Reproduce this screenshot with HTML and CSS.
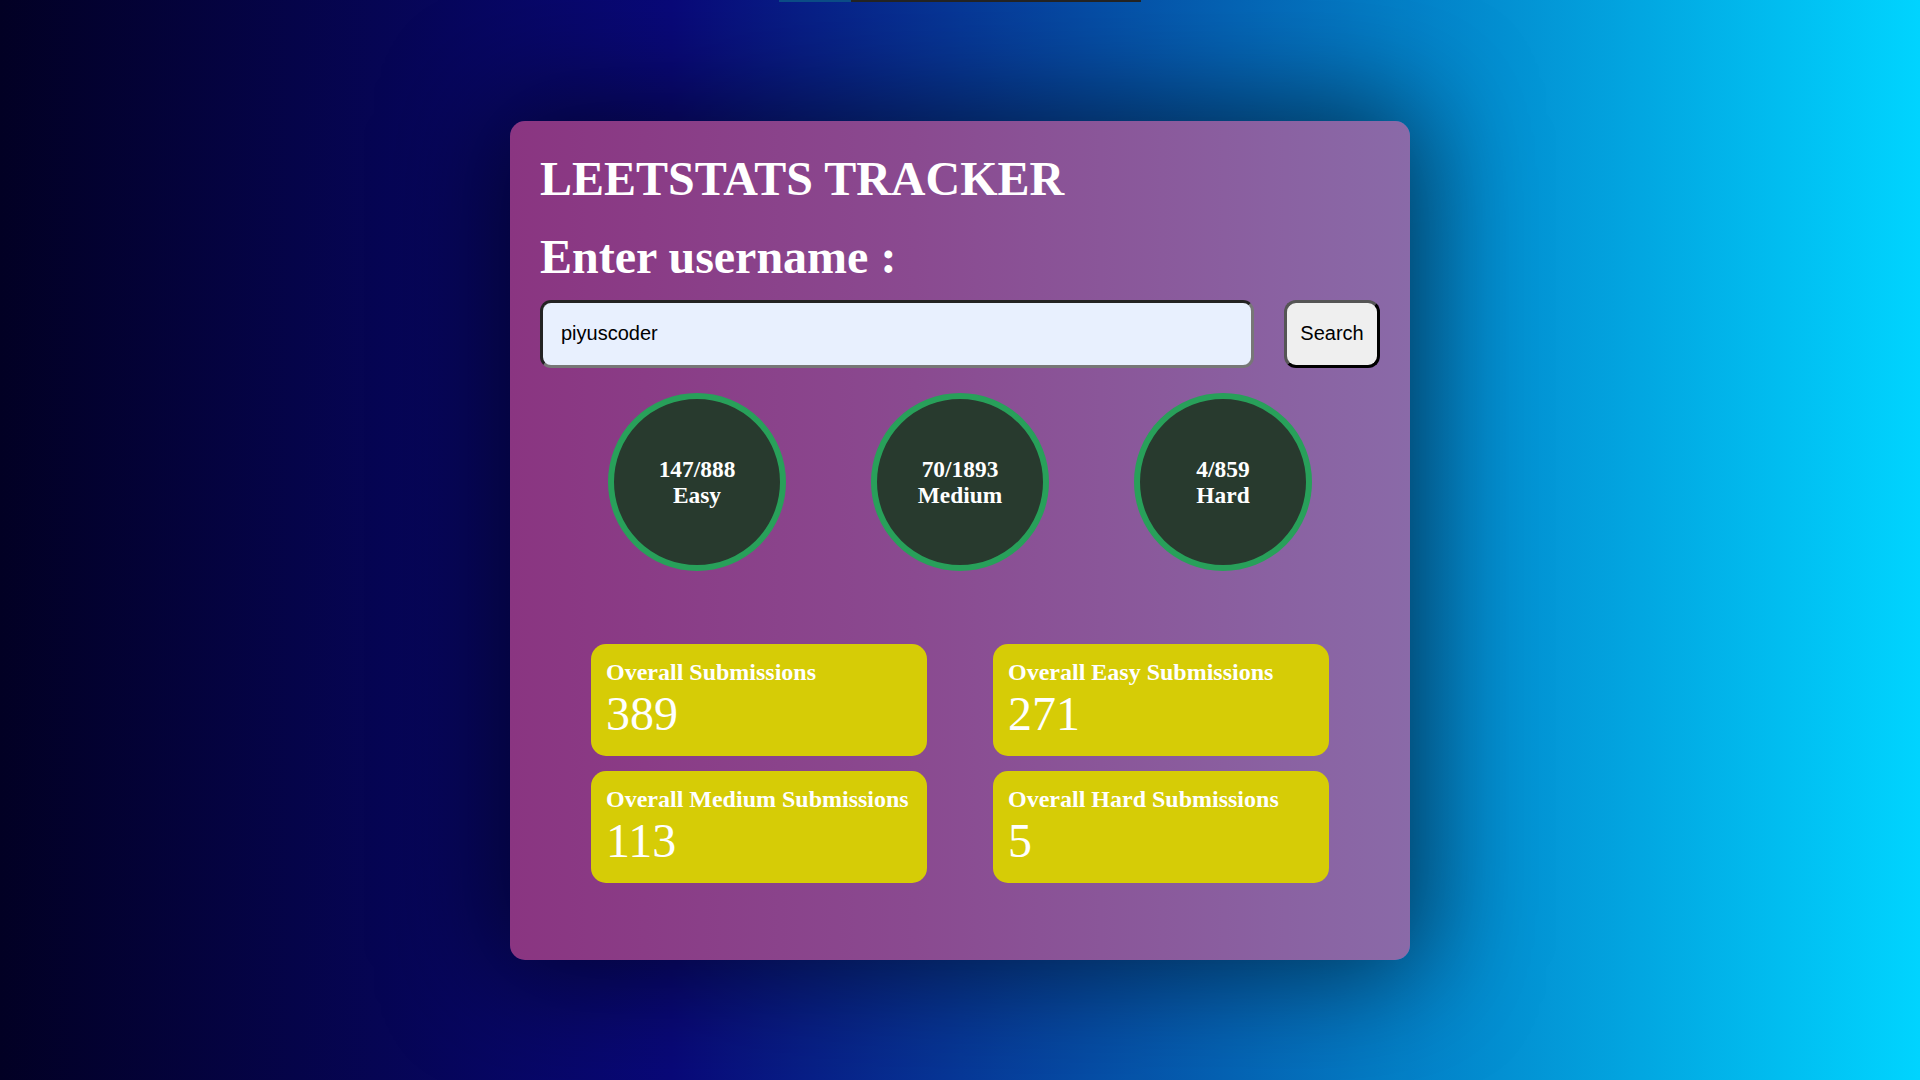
FILE: index.html
```html
<!DOCTYPE html>
<html lang="en">
<head>
<meta charset="UTF-8">
<title>LeetStats Tracker</title>
<link rel="stylesheet" href="styles.css">
</head>
<body>
  <div class="topbar"><span class="topbar-a"></span><span class="topbar-b"></span></div>
  <main class="card">
    <h1 class="title">LEETSTATS TRACKER</h1>
    <h2 class="label">Enter username :</h2>
    <div class="search-row">
      <input class="user-input" type="text" value="piyuscoder">
      <button class="search-btn">Search</button>
    </div>
    <div class="circles">
      <div class="circle"><span>147/888</span><span>Easy</span></div>
      <div class="circle"><span>70/1893</span><span>Medium</span></div>
      <div class="circle"><span>4/859</span><span>Hard</span></div>
    </div>
    <div class="stats">
      <div class="stat"><p class="stat-title">Overall Submissions</p><p class="stat-num">389</p></div>
      <div class="stat"><p class="stat-title">Overall Easy Submissions</p><p class="stat-num">271</p></div>
      <div class="stat"><p class="stat-title">Overall Medium Submissions</p><p class="stat-num">113</p></div>
      <div class="stat"><p class="stat-title">Overall Hard Submissions</p><p class="stat-num">5</p></div>
    </div>
  </main>
</body>
</html>
```

FILE: styles.css
```css
* { box-sizing: border-box; }

html, body {
  margin: 0;
  padding: 0;
}

body {
  min-height: 100vh;
  display: flex;
  align-items: center;
  justify-content: center;
  background: linear-gradient(90deg, #020024 0%, #090979 35%, #00d4ff 100%);
  font-family: "Liberation Serif", "Times New Roman", serif;
  color: #fff;
  overflow: hidden;
}

.topbar {
  position: absolute;
  top: 0;
  left: 779px;
  height: 2px;
  display: flex;
}
.topbar-a { width: 72px; background: #0b4c86; }
.topbar-b { width: 290px; background: #232323; }

.card {
  width: 900px;
  padding: 30px 30px 77px;
  border-radius: 15px;
  background: linear-gradient(90deg, #8a3581 0%, #8a4a90 45%, #8a6aa8 100%);
  box-shadow: 0 0 110px 15px rgba(0, 0, 0, 0.55);
}

.title {
  margin: 0;
  font-size: 48px;
  line-height: 55px;
  font-weight: bold;
}

.label {
  margin: 23px 0 0;
  font-size: 48px;
  line-height: 55px;
  font-weight: bold;
}

.search-row {
  margin-top: 16px;
  display: flex;
  gap: 30px;
  align-items: stretch;
}

.user-input {
  flex: 1;
  height: 68px;
  padding: 0 18px;
  border: 3px solid;
  border-color: #232323 #777 #777 #232323;
  border-radius: 11px;
  background: #e8f0fe;
  font-family: "Liberation Sans", Arial, sans-serif;
  font-size: 20px;
  color: #000;
  outline: none;
}

.search-btn {
  width: 96px;
  height: 68px;
  padding: 0;
  border: 3px solid;
  border-color: #555 #000 #000 #555;
  border-radius: 12px;
  background: #efefef;
  font-family: "Liberation Sans", Arial, sans-serif;
  font-size: 20px;
  color: #000;
}

.circles {
  margin-top: 25px;
  display: flex;
  justify-content: center;
  gap: 85px;
}

.circle {
  width: 178px;
  height: 178px;
  border-radius: 50%;
  border: 6px solid #28a05a;
  background: #283a2e;
  display: flex;
  flex-direction: column;
  align-items: center;
  justify-content: center;
  font-weight: bold;
  font-size: 23.4px;
  line-height: 26px;
}

.stats {
  margin-top: 73px;
  display: grid;
  grid-template-columns: 336px 336px;
  column-gap: 66px;
  row-gap: 15px;
  justify-content: center;
}

.stat {
  height: 112px;
  padding: 15px 15px;
  border-radius: 15px;
  background: #d6cc06;
}

.stat-title {
  margin: 0;
  font-size: 24px;
  line-height: 27px;
  font-weight: bold;
}

.stat-num {
  margin: 0;
  font-size: 48px;
  line-height: 55px;
}
```
